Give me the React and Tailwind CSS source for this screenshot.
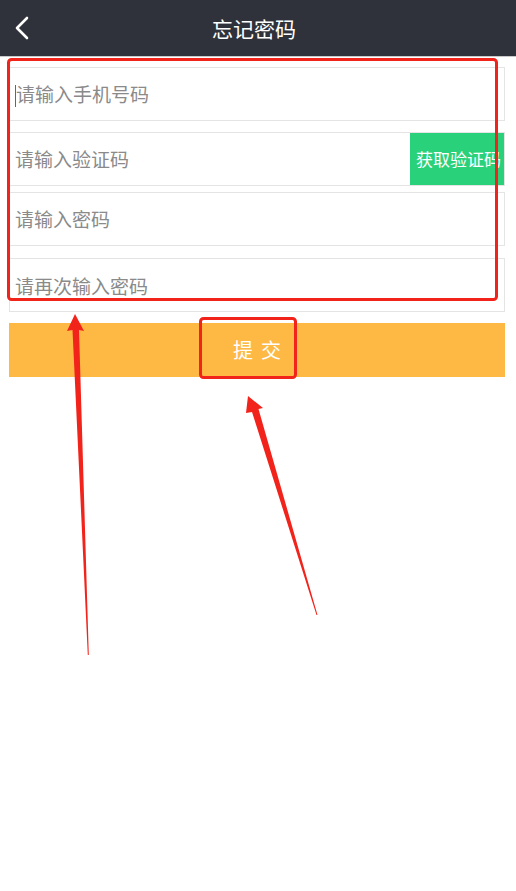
import React from "react";

const font = { fontFamily: '"Noto Sans CJK SC", "Noto Sans", sans-serif' };

function Row({ children, className = "" }) {
  return (
    <div className={"relative flex items-center h-[54px] border border-[#e4e4e4] bg-white overflow-hidden " + className}>
      {children}
    </div>
  );
}

export default function App() {
  return (
    <div className="relative w-[516px] h-[891px] bg-white overflow-hidden" style={font}>
      <div className="relative flex items-center justify-center h-[57px] bg-[#2f323a] border-b border-[#c9c9c9] pr-[8px]">
        <svg className="absolute left-[13px] top-[15px]" width="18" height="26" viewBox="0 0 18 26">
          <polyline points="14,3 4,13 14,23" fill="none" stroke="#ffffff" strokeWidth="2.6" strokeLinecap="round" strokeLinejoin="round" />
        </svg>
        <span className="text-[21px] text-white leading-none">忘记密码</span>
      </div>

      <div className="flex flex-col pl-[9px] pr-[11px] pt-[10px] w-[516px]">
        <Row>
          <span className="absolute left-[5px] top-[17px] w-px h-[22px] bg-[#666]" />
          <span className="pl-[6px] text-[19px] text-[#8a8a8a]">请输入手机号码</span>
        </Row>
        <Row className="mt-[11px]">
          <span className="pl-[5px] text-[19px] text-[#8a8a8a]">请输入验证码</span>
          <div className="absolute right-0 top-0 bottom-0 w-[94px] bg-[#29d27a] flex items-center pl-[6px] overflow-hidden">
            <span className="text-[17px] text-white whitespace-nowrap">获取验证码</span>
          </div>
        </Row>
        <Row className="mt-[6px] h-[53px]">
          <span className="pl-[5px] text-[19px] text-[#8a8a8a]">请输入密码</span>
        </Row>
        <Row className="mt-[12px] h-[53px]">
          <span className="pl-[5px] pt-[3px] text-[19px] text-[#8a8a8a]">请再次输入密码</span>
        </Row>
        <div className="mt-[11px] h-[54px] bg-[#feb945] flex items-center justify-center">
          <span className="text-[20px] text-white tracking-[8px] pl-[8px]">提交</span>
        </div>
      </div>

      <svg className="absolute left-0 top-0 pointer-events-none" width="516" height="891" viewBox="0 0 516 891">
        <rect x="8.5" y="59.5" width="488" height="240" rx="3" fill="none" stroke="#f2231b" strokeWidth="3" />
        <rect x="200.5" y="318.5" width="95" height="59" rx="3" fill="none" stroke="#f2231b" strokeWidth="3" />
        <polygon points="75,314 84,331 79,330 88.8,655 87.8,655 72.5,330 67,331" fill="#f2231b" />
        <polygon points="248,396 263,408 258.5,409 317.5,615 316.5,615 252,412 246,413" fill="#f2231b" />
      </svg>
    </div>
  );
}
